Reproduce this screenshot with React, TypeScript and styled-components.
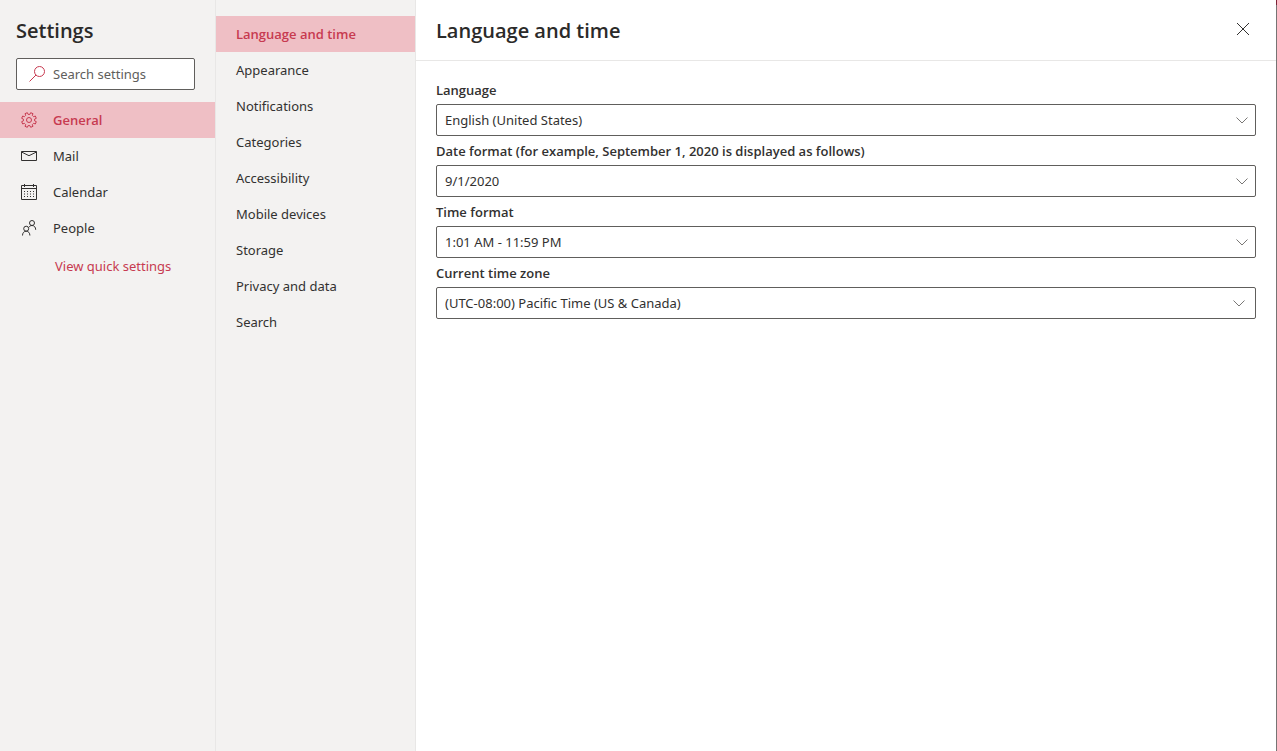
import React, { useId } from "react";
import styled, { createGlobalStyle, css } from "styled-components";

const colors = {
  accent: "#c73a50",
  selected: "#efbfc5",
  pane: "#f3f2f1",
  divider: "#e8e7e6",
  text: "#323130",
  heading: "#2b2a29",
  muted: "#605e5c",
};

const GlobalStyle = createGlobalStyle`
  *, *::before, *::after { box-sizing: border-box; }
  body {
    margin: 0;
    background: #fff;
    color: ${colors.text};
    font-family: "Noto Sans", "Open Sans", sans-serif;
    font-size: 13px;
    line-height: 20px;
  }
  button, input, select { font: inherit; color: inherit; }
`;

const semibold = css`
  font-family: "Open Sans", "Noto Sans", sans-serif;
  font-weight: 600;
`;

const Dialog = styled.div`
  display: grid;
  grid-template-columns: 216px 200px minmax(0, 1fr);
  min-height: 100vh;
  background: #fff;
  border: 0 solid #767474;
  border-right-width: 1px;
  border-image: linear-gradient(#7c2236 6px, #767474 6px) 1;
`;

const Pane = styled.nav`
  background: ${colors.pane};
  border-right: 1px solid ${colors.divider};
`;

const CategoryPane = styled(Pane)`
  padding-top: 16px;
`;

const Title = styled.h1`
  ${semibold}
  margin: 0;
  padding: 16px 16px 12px;
  color: ${colors.heading};
  font-size: 20px;
  line-height: 30px;
`;

const SearchBox = styled.label`
  display: flex;
  align-items: center;
  gap: 8px;
  height: 32px;
  margin: 0 20px 12px 16px;
  padding-left: 12px;
  background: #fff;
  border: 1px solid ${colors.muted};
  border-radius: 2px;
  color: ${colors.accent};
`;

const SearchInput = styled.input`
  flex: 1;
  min-width: 0;
  padding: 0;
  border: 0;
  outline: 0;
  background: transparent;
  color: ${colors.text};
  &::placeholder { color: ${colors.muted}; opacity: 1; }
`;

const NavList = styled.ul`
  margin: 0;
  padding: 0;
  list-style: none;
`;

const NavItem = styled.button<{ $selected?: boolean }>`
  display: flex;
  align-items: center;
  gap: 16px;
  width: 100%;
  height: 36px;
  padding: 0 20px;
  border: 0;
  background: transparent;
  text-align: left;
  cursor: pointer;
  ${({ $selected }) =>
    $selected &&
    css`
      ${semibold}
      background: ${colors.selected};
      color: ${colors.accent};
    `}
`;

const SectionItem = styled(NavItem)`
  padding-left: 21px;
`;

const QuickLink = styled.a`
  display: block;
  padding: 10px 20px 10px 55px;
  color: ${colors.accent};
  text-decoration: none;
`;

const Header = styled.header`
  display: flex;
  align-items: flex-start;
  justify-content: space-between;
  height: 61px;
  padding: 13px 17px 0 20px;
  border-bottom: 1px solid ${colors.divider};
`;

const Heading = styled.h2`
  ${semibold}
  margin: 0;
  color: ${colors.heading};
  font-size: 20px;
  line-height: 36px;
`;

const CloseButton = styled.button`
  display: grid;
  place-items: center;
  width: 32px;
  height: 32px;
  padding: 0;
  border: 0;
  background: transparent;
  cursor: pointer;
`;

const Form = styled.form`
  padding: 14px 20px;
`;

const Field = styled.div`
  display: flex;
  flex-direction: column;
`;

const FieldLabel = styled.label`
  ${semibold}
  padding: 5px 0 4px;
`;

const SelectFrame = styled.div`
  position: relative;
`;

const Select = styled.select`
  display: block;
  appearance: none;
  width: 100%;
  height: 32px;
  padding: 0 28px 0 8px;
  background: #fff;
  border: 1px solid ${colors.muted};
  border-radius: 2px;
`;

const Chevron = styled.svg<{ $inset: number }>`
  position: absolute;
  top: 10px;
  right: ${({ $inset }) => $inset}px;
  pointer-events: none;
`;

const Icon = ({ children }: { children: React.ReactNode }) => (
  <svg width="16" height="16" viewBox="0 0 16 16" fill="none" stroke="currentColor" aria-hidden="true">
    {children}
  </svg>
);

const gearPath = (() => {
  const points: string[] = [];
  for (let i = 0; i < 8; i++) {
    const center = ((i + 0.5) * Math.PI) / 4;
    for (const [offset, radius] of [[-0.23, 5.7], [-0.17, 7.5], [0.17, 7.5], [0.23, 5.7]]) {
      const a = center + offset;
      points.push(`${(8 + radius * Math.sin(a)).toFixed(2)} ${(8 - radius * Math.cos(a)).toFixed(2)}`);
    }
  }
  return `M${points.join("L")}Z`;
})();

const GearIcon = () => (
  <Icon>
    <path d={gearPath} />
    <circle cx="8" cy="8" r="2.5" />
  </Icon>
);

const MailIcon = () => (
  <Icon>
    <path d="M.5 3.5h15v9H.5zM.5 4 8 7.700 15.500 4" />
  </Icon>
);

const CalendarIcon = () => (
  <Icon>
    <path d="M.5 1.5h15v14H.5zM.5 4.5h15M3.5 0v3M12.5 0v3" />
    <path d="M3 7.5h10M3 10h10M3 12.500h10" strokeDasharray="1 2" />
  </Icon>
);

const PeopleIcon = () => (
  <Icon>
    <circle cx="5.200" cy="8.700" r="2.500" />
    <path d="M1.500 15.500c0-2.600 1.500-4.300 3.700-4.300s3.700 1.700 3.700 4.300" />
    <circle cx="11" cy="3" r="2.500" />
    <path d="M7.800 7.400C8.500 6.200 9.600 5.500 11 5.500c2.200 0 3.700 1.700 3.700 4.300" />
  </Icon>
);

const SearchIcon = () => (
  <Icon>
    <circle cx="10.500" cy="5.500" r="5" />
    <path d="M7 9 .5 15.500" />
  </Icon>
);

interface SelectFieldProps {
  label: string;
  value: string;
  inset?: number;
}

const SelectField = ({ label, value, inset = 8 }: SelectFieldProps) => {
  const id = useId();
  return (
    <Field>
      <FieldLabel htmlFor={id}>{label}</FieldLabel>
      <SelectFrame>
        <Select id={id} defaultValue={value}>
          <option>{value}</option>
        </Select>
        <Chevron $inset={inset} width="12" height="12" viewBox="0 0 12 12" fill="none" stroke="#797775" aria-hidden="true">
          <path d="M.5 3.500 6 9l5.500-5.500" />
        </Chevron>
      </SelectFrame>
    </Field>
  );
};

const sections = [
  { name: "General", icon: <GearIcon /> },
  { name: "Mail", icon: <MailIcon /> },
  { name: "Calendar", icon: <CalendarIcon /> },
  { name: "People", icon: <PeopleIcon /> },
];

const categories = [
  "Language and time",
  "Appearance",
  "Notifications",
  "Categories",
  "Accessibility",
  "Mobile devices",
  "Storage",
  "Privacy and data",
  "Search",
];

export default function App() {
  return (
    <>
      <GlobalStyle />
      <Dialog>
        <Pane aria-label="Settings sections">
          <Title>Settings</Title>
          <SearchBox>
            <SearchIcon />
            <SearchInput type="text" placeholder="Search settings" aria-label="Search settings" />
          </SearchBox>
          <NavList>
            {sections.map(({ name, icon }) => (
              <li key={name}>
                <SectionItem type="button" $selected={name === "General"}>
                  {icon}
                  {name}
                </SectionItem>
              </li>
            ))}
          </NavList>
          <QuickLink href="#quick-settings">View quick settings</QuickLink>
        </Pane>
        <CategoryPane aria-label="General settings">
          <NavList>
            {categories.map((name) => (
              <li key={name}>
                <NavItem type="button" $selected={name === "Language and time"}>
                  {name}
                </NavItem>
              </li>
            ))}
          </NavList>
        </CategoryPane>
        <main>
          <Header>
            <Heading>Language and time</Heading>
            <CloseButton type="button" aria-label="Close">
              <svg width="12" height="12" viewBox="0 0 12 12" fill="none" stroke="currentColor" aria-hidden="true">
                <path d="m0 0 12 12M12 0 0 12" />
              </svg>
            </CloseButton>
          </Header>
          <Form>
            <SelectField label="Language" value="English (United States)" />
            <SelectField label="Date format (for example, September 1, 2020 is displayed as follows)" value="9/1/2020" />
            <SelectField label="Time format" value="1:01 AM - 11:59 PM" />
            <SelectField label="Current time zone" value="(UTC-08:00) Pacific Time (US & Canada)" inset={11} />
          </Form>
        </main>
      </Dialog>
    </>
  );
}
